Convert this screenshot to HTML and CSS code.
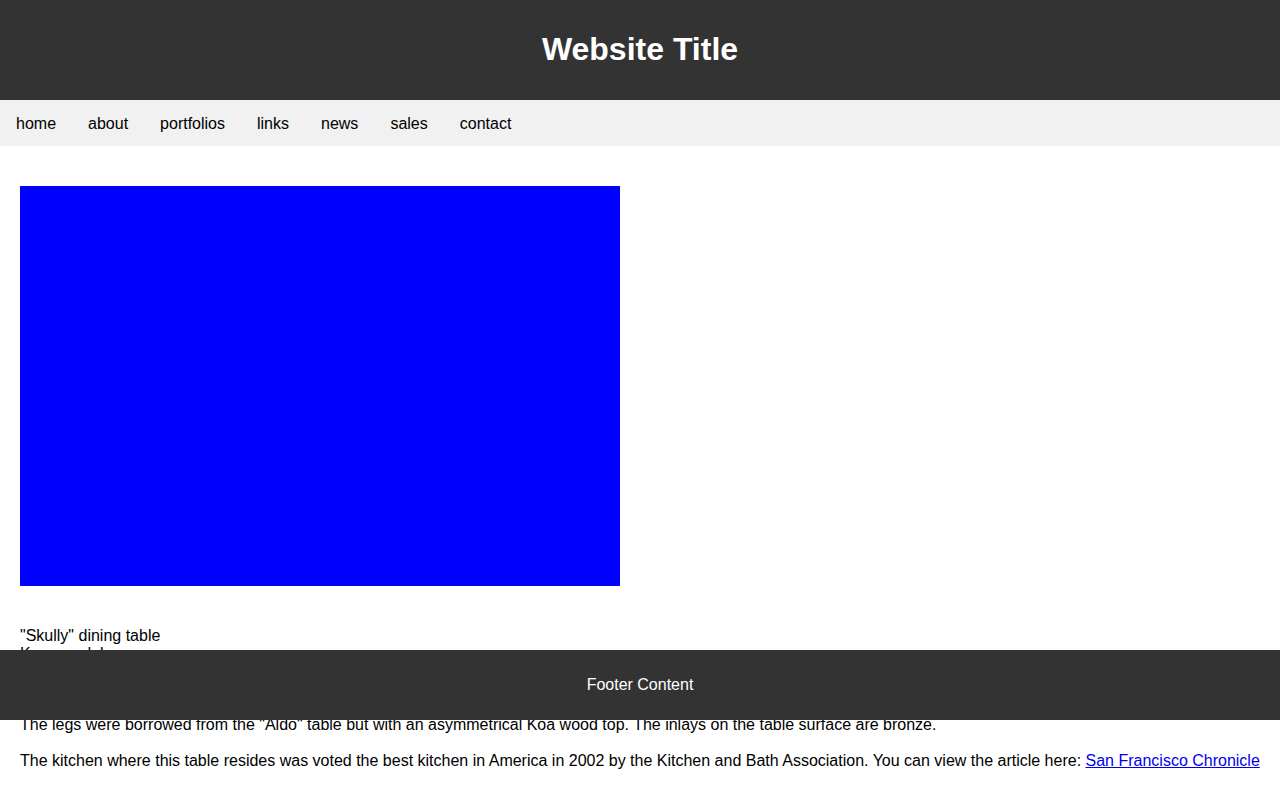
FILE: index.html
```html
<!DOCTYPE html>
<html lang="en">
<head>
<meta charset="utf-8">
<title>Website Title</title>
<link rel="stylesheet" href="styles.css">
</head>
<body>
<header class="site-header">
  <h1 class="site-title">Website Title</h1>
</header>
<nav class="site-nav">
  <a href="#">home</a>
  <a href="#">about</a>
  <a href="#">portfolios</a>
  <a href="#">links</a>
  <a href="#">news</a>
  <a href="#">sales</a>
  <a href="#">contact</a>
</nav>
<main class="content">
  <div class="photo"></div>
  <p class="caption">"Skully" dining table<br>Koa wood, bronze<br>Private residence<br>2002</p>
  <p>The legs were borrowed from the "Aldo" table but with an asymmetrical Koa wood top. The inlays on the table surface are bronze.</p>
  <p>The kitchen where this table resides was voted the best kitchen in America in 2002 by the Kitchen and Bath Association. You can view the article here: <a href="#">San Francisco Chronicle</a></p>
</main>
<footer class="site-footer">Footer Content</footer>
</body>
</html>
```

FILE: styles.css
```css
* { box-sizing: border-box; }
body {
  margin: 0;
  font-family: "Liberation Sans", Arial, sans-serif;
  font-size: 16px;
  color: #000;
  background: #fff;
}
.site-header {
  background: #333;
  color: #fff;
  text-align: center;
  padding: 31px 0 32px;
}
.site-title {
  margin: 0;
  font-size: 32px;
  line-height: 37px;
  font-weight: bold;
}
.site-nav {
  display: flex;
  background: #f1f1f1;
}
.site-nav a {
  color: #000;
  text-decoration: none;
  padding: 15px 16px 13px;
}
.content {
  padding: 40px 20px 20px;
}
.photo {
  width: 600px;
  height: 400px;
  background: #00f;
}
.content p { margin: 17px 0 18px; }
.content .caption { margin: 41px 0 17px; }
.content a { color: #00e; }
.site-footer {
  position: fixed;
  left: 0;
  right: 0;
  top: 650px;
  height: 70px;
  background: #333;
  color: #fff;
  text-align: center;
  line-height: 70px;
}
```
